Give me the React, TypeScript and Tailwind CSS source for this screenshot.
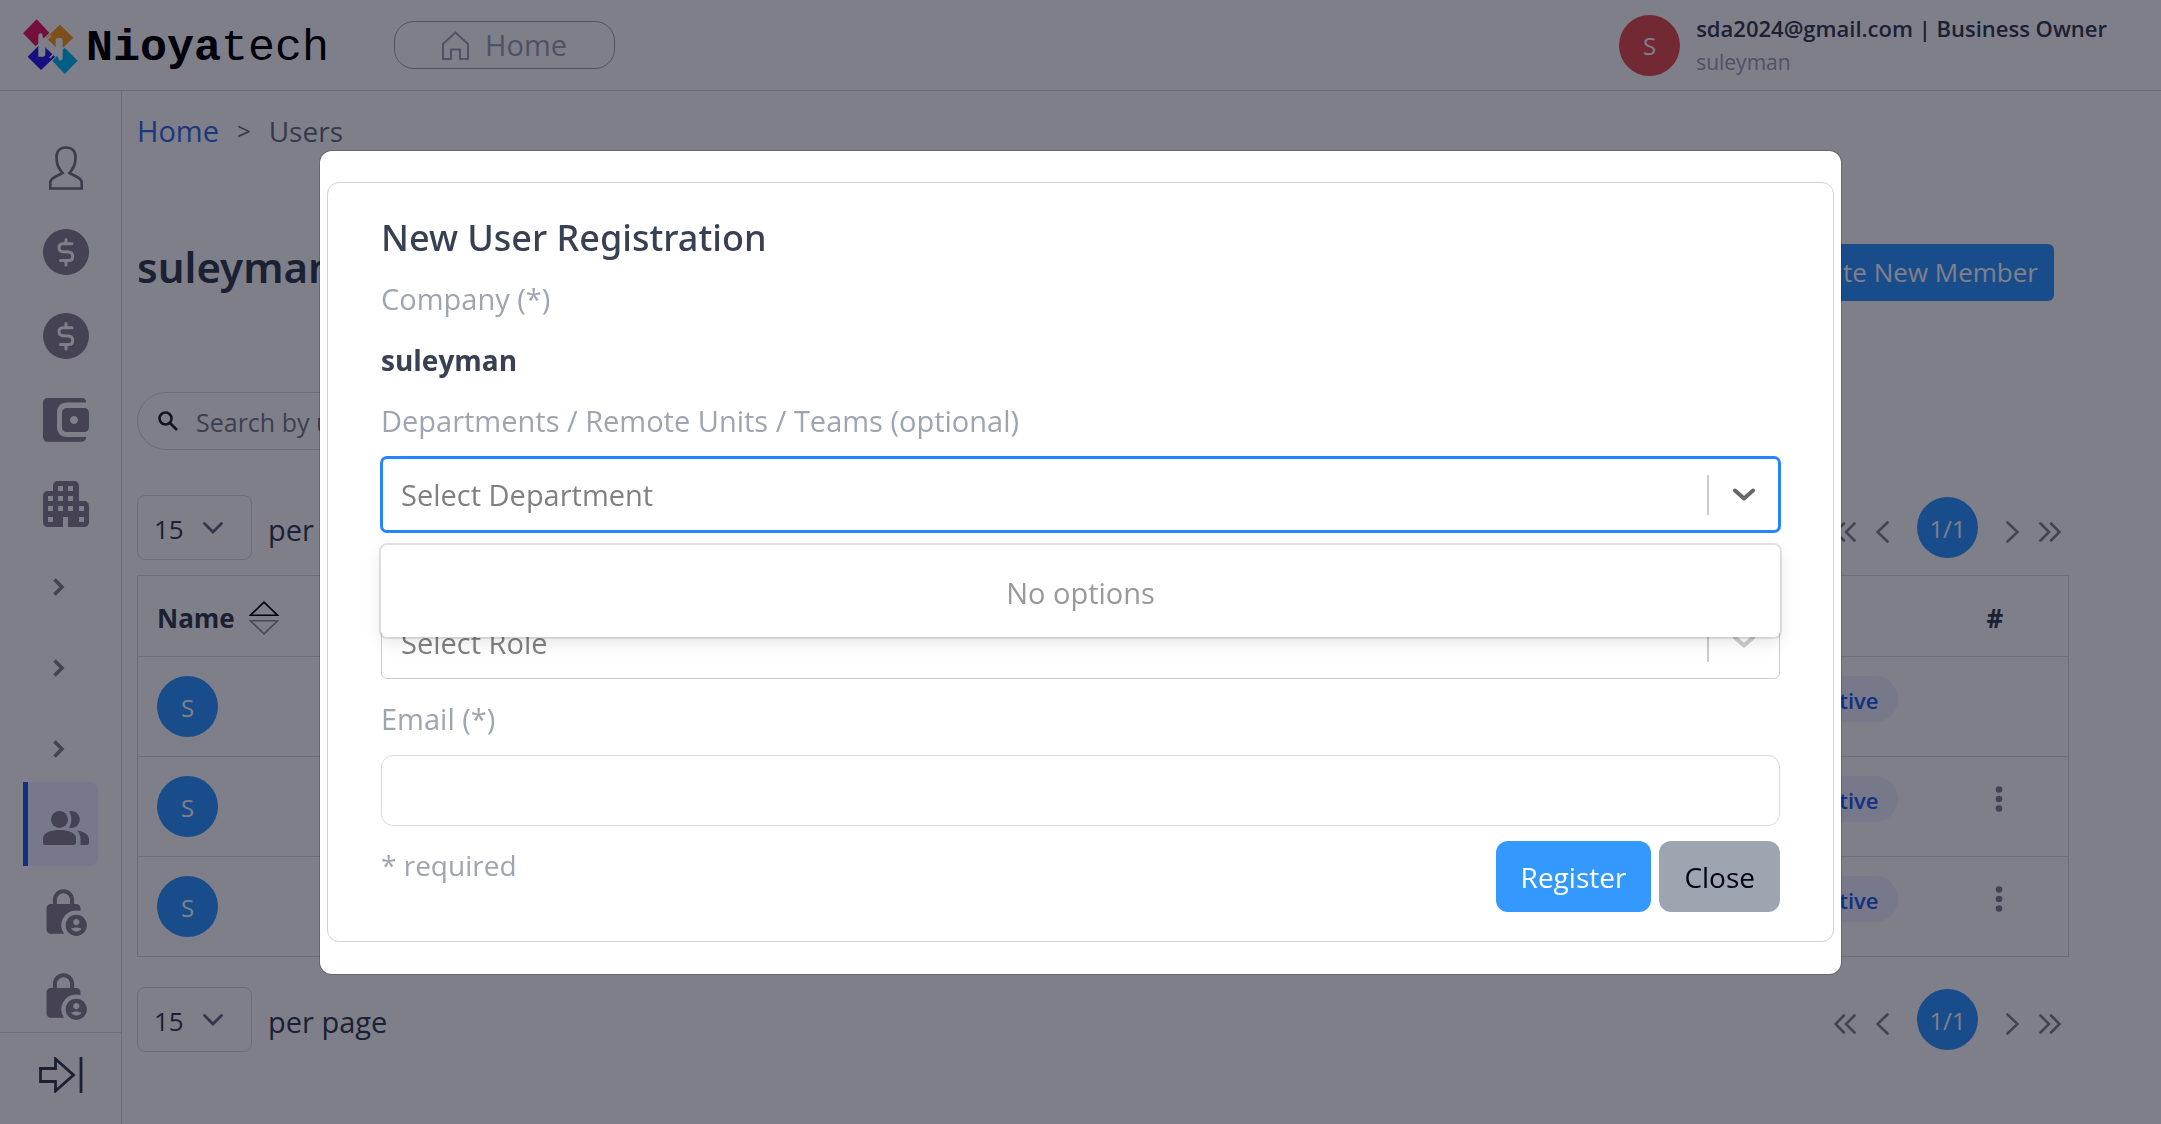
import type { ReactNode } from "react";
import { MdLockPerson } from "react-icons/md";

function Logo() {
  return (
    <a href="#" aria-label="Nioyatech" className="flex items-center gap-[7px] text-black">
      <svg viewBox="0 0 168 174" className="h-[58px] w-14" aria-hidden="true">
        <path d="M41 10 79 50 38 91 0 52z" fill="#e91e63" />
        <path d="M111 26 151 65 110 105 69 65z" fill="#f9a01b" />
        <path d="M54 82 96 122 54 162 14 122z" fill="#2a1ee8" />
        <path d="M125 95 164 134 125 174 88 134z" fill="#00bbf0" />
        <path d="M46 60q0-8 7-8 6 0 6 8 0 8 8 8v46q0 8-8 8H46z" fill="#fff" />
        <path d="M98 74q0-8 8-8h5q8 0 8 8v50q0 10-7 10-6 0-6-8 0-6-8-6z" fill="#fff" />
        <path d="M84 58 58 82M104 102 80 126" stroke="#fff" strokeWidth="5" />
      </svg>
      <span className="pt-2 font-['Liberation_Mono',monospace] text-[45px] leading-[50px]">
        <b>Nioya</b>tech
      </span>
    </a>
  );
}

function HomeIcon() {
  return (
    <svg viewBox="0 0 27 29" className="h-[29px] w-[27px]" fill="none" stroke="currentColor" strokeWidth="2" aria-hidden="true">
      <path d="M1 13 13.500 1.500 26 13v15h-8V18.500h-9V28H1z" />
    </svg>
  );
}

function PersonIcon() {
  return (
    <svg viewBox="0 0 34 44" className="h-11 w-[34px] text-[#77777f]" fill="none" stroke="currentColor" strokeWidth="2.700" aria-hidden="true">
      <path d="M13.500 27C9.500 22 7.500 19 7.500 11 7.500 5 11.500 1.500 17 1.500S26.500 5 26.500 11c0 8-2 11-6 16l8.500 4.500c2.800 1.500 3.800 3 3.800 5V42.500H1.200V36.500c0-2 1-3.500 3.800-5z" />
    </svg>
  );
}

function DollarIcon() {
  return (
    <svg viewBox="0 0 46 46" className="size-[46px]" aria-hidden="true">
      <circle cx="23" cy="23" r="23" fill="currentColor" />
      <path
        d="M29 14.800H19.500a3.500 3.500 0 0 0-3.500 3.700c0 2.500 1.500 4 4 4.200l5.500.4c2.600.2 4.200 1.800 4.200 4.500 0 2.500-1.500 4-3.900 4H17.500M23 10.500v4M23 32v4"
        fill="none"
        stroke="#fff"
        strokeWidth="3"
        strokeLinecap="round"
      />
    </svg>
  );
}

function WalletIcon() {
  return (
    <svg viewBox="0 0 46 44" className="h-11 w-[46px]" fill="currentColor" aria-hidden="true">
      <path d="M5 0h34c2.500 0 4.300 2 4.300 4.500H24c-6 0-10 4-10 10V29c0 6 4 10 10 10h19.300c0 2.700-1.800 4.700-4.300 4.700H5c-3 0-5-2-5-5V5c0-3 2-5 5-5z" />
      <path fillRule="evenodd" d="M24 10h17c3 0 5 2 5 5v14c0 3-2 5-5 5H24c-3 0-5-2-5-5V15c0-3 2-5 5-5zm7 8a4 4 0 1 0 .01 0z" />
    </svg>
  );
}

function BuildingIcon() {
  return (
    <svg viewBox="0 0 46 46" className="size-[46px]" aria-hidden="true">
      <path
        d="M0 15c0-3 2-5 5-5h5V5c0-3 2-5 5-5h16c3 0 5 2 5 5v15h5c3 0 5 2 5 5v16c0 3-2 5-5 5H25V36h-5v10H5c-3 0-5-2-5-5z"
        fill="currentColor"
      />
      <path
        d="M15 5h5v5h-5zM25 5h5v5h-5zM5 15h5v5H5zM15 15h5v5h-5zM25 15h5v5h-5zM5 25h5v5H5zM15 25h5v5h-5zM25 25h5v5h-5zM36 25h5v5h-5zM5 36h5v5H5zM36 36h5v5h-5z"
        fill="#fff"
      />
    </svg>
  );
}

function PeopleIcon() {
  return (
    <svg viewBox="0 0 46 34" className="h-[34px] w-[46px]" fill="currentColor" aria-hidden="true">
      <circle cx="16.500" cy="8.500" r="8.500" />
      <path d="M26 .3a8.500 8.500 0 1 1 0 16.400c3.200-5 3.200-11.400 0-16.400z" />
      <path d="M0 27.500C0 21 9 19 16.500 19S33 21 33 27.500V32a2 2 0 0 1-2 2H2a2 2 0 0 1-2-2z" />
      <path d="M34 19.500c6 1 12 3.500 12 8.500v4a2 2 0 0 1-2 2h-6.500v-6c0-3.500-1.300-6.300-3.500-8.500z" />
    </svg>
  );
}

function ChevronRight() {
  return (
    <svg viewBox="0 0 12 18" className="-ml-3.5 h-[18px] w-3" fill="none" stroke="currentColor" strokeWidth="3.600" aria-hidden="true">
      <path d="M1.500 1.500 9 9l-7.500 7.500" />
    </svg>
  );
}

function ExpandIcon() {
  return (
    <svg viewBox="0 0 44 36" className="h-9 w-11" fill="none" stroke="currentColor" strokeWidth="2.800" aria-hidden="true">
      <path d="M1.500 11.500h15V2l18 16-18 16v-9.500h-15zM42 0v36" />
    </svg>
  );
}

function SortIcon() {
  return (
    <svg viewBox="0 0 30 34" className="h-[34px] w-[30px]" fill="none" strokeWidth="1.600" aria-hidden="true">
      <path d="M1.500 14.200 15 1.200l13.500 13z" stroke="#000" />
      <path d="M1.500 19.800 15 32.800l13.500-13z" stroke="#8f8f96" />
    </svg>
  );
}

function Angles({ double = false, left = false }: { double?: boolean; left?: boolean }) {
  return (
    <svg
      viewBox={double ? "0 0 22 22" : "0 0 13 22"}
      className={(double ? "w-[22px]" : "w-[13px]") + " h-[22px]" + (left ? " rotate-180" : "")}
      fill="none"
      stroke="currentColor"
      strokeWidth="2.600"
      strokeLinecap="round"
      aria-hidden="true"
    >
      {double ? <path d="M1.500 2.500 10 11l-8.500 8.500M12 2.500 20.500 11 12 19.500" /> : <path d="M1.500 1.500 11.500 11l-10 9.500" />}
    </svg>
  );
}

function NavItem({ label, active = false, children }: { label: string; active?: boolean; children: ReactNode }) {
  return (
    <a
      href="#"
      aria-label={label}
      className={
        "flex h-[84px] shrink-0 items-center justify-center " +
        (active ? "mx-[23px] rounded-r-lg border-l-[5px] border-[#2563eb] bg-[#eff3ff] pl-2 pr-[3px] pt-2" : "pl-[10px]")
      }
    >
      {children}
    </a>
  );
}

function Avatar({ color }: { color: string }) {
  return (
    <span className={"flex size-[61px] shrink-0 items-center justify-center rounded-full pt-0.5 text-[24px] text-white " + color}>S</span>
  );
}

function PageControls({ id }: { id: string }) {
  return (
    <div className="flex items-center justify-between pr-2">
      <div className="flex items-center gap-4">
        <div className="relative">
          <select
            id={id}
            className="h-[65px] w-[115px] appearance-none rounded-lg border border-[#d8dbe0] bg-white pl-4 pt-1 text-[26px] text-[#374151]"
          >
            <option>15</option>
          </select>
          <svg viewBox="0 0 20 12" className="pointer-events-none absolute right-[29px] top-[27px] h-3 w-5" fill="none" stroke="#636f83" strokeWidth="2.800" strokeLinecap="round" aria-hidden="true">
            <path d="M1.500 1.500 10 10l8.500-8.500" />
          </svg>
        </div>
        <label htmlFor={id} className="pt-1 text-[29px] leading-10 text-[#374151]">
          per page
        </label>
      </div>
      <div className="flex items-center gap-7 text-[#888591]">
        <div className="flex gap-5 pt-2">
          <button aria-label="First page"><Angles double left /></button>
          <button aria-label="Previous page"><Angles left /></button>
        </div>
        <span className="flex size-[61px] items-center justify-center rounded-full bg-[#3399ff] pt-0.5 text-[24px] text-white">1/1</span>
        <div className="flex gap-5 pt-2">
          <button aria-label="Next page"><Angles /></button>
          <button aria-label="Last page"><Angles double /></button>
        </div>
      </div>
    </div>
  );
}

function SelectField({ id, label, placeholder, open = false }: { id: string; label: string; placeholder: string; open?: boolean }) {
  return (
    <div className="flex flex-col gap-4">
      <label htmlFor={id} className="text-[#9da5b1]">{label}</label>
      <div className="relative">
        <select
          id={id}
          className={
            "block h-[75px] w-full appearance-none rounded-md bg-white text-[29px] text-[#808080] outline-none " +
            (open ? "border-2 border-[#2684ff] px-[18px] ring-1 ring-[#2684ff]" : "border border-[#cccccc] px-[19px] pt-0.5")
          }
        >
          <option>{placeholder}</option>
        </select>
        <div className={"pointer-events-none absolute inset-y-4 right-[25px] flex items-center gap-6 " + (open ? "text-[#666666]" : "text-[#cccccc]")}>
          <span className="h-10 w-0.5 bg-[#cccccc]" />
          <svg viewBox="0 0 22 13" className="h-[13px] w-[22px]" fill="none" stroke="currentColor" strokeWidth="4" strokeLinecap="round" strokeLinejoin="round" aria-hidden="true">
            <path d="M2 2.500 11 10.500l9-8" />
          </svg>
        </div>
        {open && (
          <div className="absolute inset-x-0 top-full z-10 mt-[13px] rounded-md bg-white pb-6 pt-7 text-center text-[#999999] shadow-[0_0_0_2px_rgba(0,0,0,0.1),0_6px_17px_rgba(0,0,0,0.1)]">
            No options
          </div>
        )}
      </div>
    </div>
  );
}

function RegistrationDialog() {
  return (
    <div className="fixed inset-0 z-20 bg-[#000015]/50 px-80 pt-[151px]">
      <div role="dialog" aria-modal="true" aria-labelledby="dialog-title" className="rounded-xl bg-white px-[7px] pb-8 pt-[31px] ring-1 ring-[#000015]/20">
        <form className="rounded-xl border border-[#d0d2d8] px-[53px] pb-[29px] pt-[29px] text-[29px] leading-10">
          <h2 id="dialog-title" className="font-['Noto_Sans',sans-serif] text-[36px] font-medium leading-[52px] text-[#374151]">New User Registration</h2>
          <p className="mt-[15px] text-[#9da5b1]">Company (*)</p>
          <p className="mb-[21px] mt-[21px] text-[28px] font-bold text-[#374151]">suleyman</p>
          <SelectField id="department" label="Departments / Remote Units / Teams (optional)" placeholder="Select Department" open />
          <div className="mt-4">
            <SelectField id="role" label="Role (*)" placeholder="Select Role" />
          </div>
          <div className="mt-5 flex flex-col gap-4">
            <label htmlFor="email" className="text-[#9da5b1]">Email (*)</label>
            <input id="email" type="email" className="h-[71px] w-full rounded-xl border border-[#d8dbe0] bg-white px-5" />
          </div>
          <div className="mt-[15px] flex items-start justify-between">
            <p className="pt-1 text-[28px] text-[#9da5b1]">* required</p>
            <div className="flex gap-2 text-[28px]">
              <button type="submit" className="h-[71px] rounded-xl bg-[#3399ff] px-[25px] text-white">Register</button>
              <button type="button" className="h-[71px] rounded-xl bg-[#9da5b1] px-[25px] text-[#000015]">Close</button>
            </div>
          </div>
        </form>
      </div>
    </div>
  );
}

const members = [{ menu: false }, { menu: true }, { menu: true }];

export default function App() {
  return (
    <div className="flex h-screen flex-col overflow-hidden bg-white font-['Open_Sans',sans-serif] text-[#374151]">
      <header className="flex h-[91px] shrink-0 items-center justify-between border-b border-[#d8dbe0] pl-[23px] pr-[54px]">
        <div className="flex items-center gap-[65px]">
          <Logo />
          <button className="flex h-12 w-[221px] items-center justify-center gap-4 rounded-[20px] border border-[#9da5b1] text-[29px] text-[#9da5b1]">
            <HomeIcon />
            Home
          </button>
        </div>
        <div className="flex items-center gap-4">
          <Avatar color="bg-[#e55353]" />
          <div className="text-[22px] leading-[34px]">
            <p className="font-semibold">sda2024@gmail.com | Business Owner</p>
            <p className="text-[21px] text-[#9da5b1]">suleyman</p>
          </div>
        </div>
      </header>

      <div className="flex min-h-0 flex-1">
        <aside className="flex w-[122px] shrink-0 flex-col border-r border-[#d8dbe0] text-[#888591]">
          <nav className="flex min-h-0 flex-1 flex-col overflow-hidden pt-[35px]">
            <NavItem label="Profile"><PersonIcon /></NavItem>
            <NavItem label="Income"><DollarIcon /></NavItem>
            <NavItem label="Expenses"><DollarIcon /></NavItem>
            <NavItem label="Wallet"><WalletIcon /></NavItem>
            <NavItem label="Companies"><BuildingIcon /></NavItem>
            <div className="flex h-[236px] shrink-0 flex-col items-center justify-between pb-6 pl-3 pt-8">
              <button aria-label="Expand group one"><ChevronRight /></button>
              <button aria-label="Expand group two"><ChevronRight /></button>
              <button aria-label="Expand group three"><ChevronRight /></button>
            </div>
            <NavItem label="Users" active><PeopleIcon /></NavItem>
            <NavItem label="Roles"><MdLockPerson className="mr-1 mt-2 size-[51px]" /></NavItem>
            <NavItem label="Permissions"><MdLockPerson className="mr-1 mt-2 size-[51px]" /></NavItem>
          </nav>
          <button aria-label="Expand sidebar" className="flex h-[92px] shrink-0 items-center justify-center border-t border-[#d8dbe0] pb-2 text-[#374151]">
            <ExpandIcon />
          </button>
        </aside>

        <main className="min-w-0 flex-1 pl-[15px] pr-[92px] pt-5">
          <nav aria-label="Breadcrumb" className="flex gap-[18px] text-[29px] leading-10 text-[#6b7280]">
            <a href="#" className="text-[#3b6fe8]">Home</a>
            <span className="text-[24px]">&gt;</span>
            <span className="text-[28px]">Users</span>
          </nav>
          <div className="mt-[86px] flex items-start justify-between pr-[15px]">
            <h1 className="font-['Noto_Sans',sans-serif] text-[42px] font-semibold leading-[60px]">suleyman</h1>
            <button className="mt-[7px] h-[57px] rounded-md bg-[#3399ff] px-4 text-[26px] text-white">Invite New Member</button>
          </div>
          <div className="mt-[91px] flex h-[58px] w-[640px] items-center gap-[18px] rounded-full border border-[#d8dbe0] pl-5">
            <svg viewBox="0 0 20 20" className="size-5 shrink-0" fill="none" stroke="#2b2b2b" strokeWidth="2.600" aria-hidden="true">
              <circle cx="7.500" cy="7.500" r="6" />
              <path d="m12 12 7 7" />
            </svg>
            <input aria-label="Search members" placeholder="Search by user" className="w-full bg-transparent pt-1 text-[25px] outline-none placeholder:text-[#7a7f8c]" />
          </div>
          <div className="mt-[45px]"><PageControls id="page-size-top" /></div>

          <table className="mt-[15px] w-full border-collapse border border-[#d8dbe0] text-left">
            <thead>
              <tr className="h-[81px] border-b border-[#d8dbe0] text-[26px]">
                <th className="pl-[19px] pt-1 font-bold">
                  <div className="flex items-center gap-[14px]">Name <SortIcon /></div>
                </th>
                <th aria-label="Status" />
                <th className="w-[102px] pl-5 pt-1 font-bold">#</th>
              </tr>
            </thead>
            <tbody>
              {members.map((member, index) => (
                <tr key={index} className="h-[100px] border-b border-[#d8dbe0]">
                  <td className="pl-[19px]"><Avatar color="bg-[#3399ff]" /></td>
                  <td className="pb-4 pr-[69px] text-right">
                    <span className="inline-block rounded-full bg-[#eef0ff] px-[19px] pb-1.5 pt-2 text-[22px] font-semibold leading-8 text-[#2563eb]">Active</span>
                  </td>
                  <td className="pb-4 pl-7">
                    {member.menu && (
                      <button aria-label="Member actions" className="block text-[#888591]">
                        <svg viewBox="0 0 8 26" className="h-[26px] w-2" fill="currentColor" aria-hidden="true">
                          <circle cx="4" cy="3.500" r="3.300" />
                          <circle cx="4" cy="13" r="3.300" />
                          <circle cx="4" cy="22.500" r="3.300" />
                        </svg>
                      </button>
                    )}
                  </td>
                </tr>
              ))}
            </tbody>
          </table>
          <div className="mt-[30px]"><PageControls id="page-size-bottom" /></div>
        </main>
      </div>
      <RegistrationDialog />
    </div>
  );
}
